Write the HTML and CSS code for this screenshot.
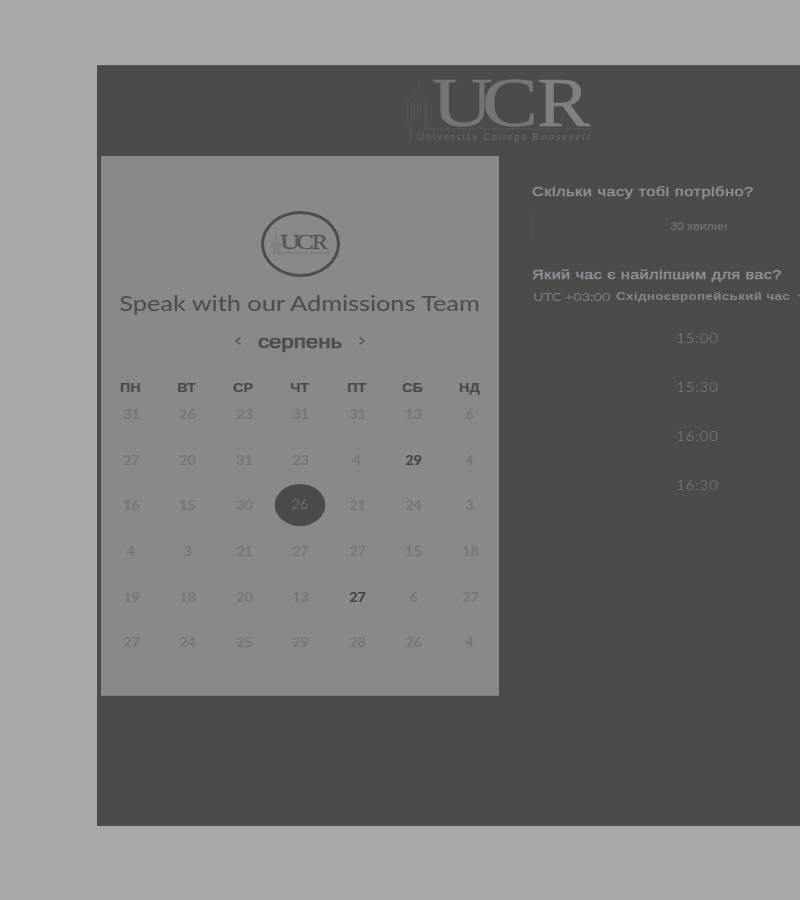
FILE: index.html
```html
<!DOCTYPE html>
<html lang="uk">
<head>
<meta charset="utf-8">
<title>Speak with our Admissions Team</title>
<link rel="stylesheet" href="styles.css">
</head>
<body>
<main class="panel">
  <header class="brand">
    <svg class="logo" viewBox="0 0 190 74" width="190" height="74" role="img">
      <g class="tower">
        <path d="M14 9v7M14 16c-1 4-6 6-6 10M14 16c1 4 6 6 6 10M2 48V30c0-3 4-3 4 0v18c0 3-4 3-4 0M9 48V28c0-4 4-4 4 0v18M16 46V28c0-4 4-4 4 0v20M22 48V30c0-3 4-3 4 0v18c0 3-4 3-4 0M6 50v18M20 48v8"/>
        <path d="M20 56H186"/>
      </g>
      <g class="letters">
        <text x="27" y="52.500" textLength="61" lengthAdjust="spacingAndGlyphs">U</text>
        <text x="77" y="52.500" textLength="56" lengthAdjust="spacingAndGlyphs">C</text>
        <text class="bright" x="132" y="52.500" textLength="53" lengthAdjust="spacingAndGlyphs">R</text>
      </g>
      <text class="sub" x="12" y="67" textLength="109" lengthAdjust="spacing">University College</text>
      <text class="sub-script" x="127" y="67" textLength="58" lengthAdjust="spacing"><tspan class="cap">R</tspan>oosevelt</text>
    </svg>
  </header>
  <div class="content">
    <section class="card">
      <div class="avatar">
        <svg class="mini" viewBox="0 0 60 26" width="60" height="26" role="img">
          <path d="M5 3v4M3 11l2-4 2 4M1 18v-6M3 20v-9M5 20v-9M7 20v-9M9 18v-6"/>
          <text x="9" y="17.500" textLength="20" lengthAdjust="spacingAndGlyphs">U</text>
          <text x="25" y="17.500" textLength="18" lengthAdjust="spacingAndGlyphs">C</text>
          <text x="41" y="17.500" textLength="16" lengthAdjust="spacingAndGlyphs">R</text>
          <text class="mini-sub" x="2" y="22.500" textLength="56" lengthAdjust="spacingAndGlyphs">University College Roosevelt</text>
        </svg>
      </div>
      <h1 class="title"><span>Speak with our Admissions Team</span></h1>
      <div class="month">
        <svg class="arrow" viewBox="0 0 8 10" width="8" height="10"><path d="M6.500 1.500 2 5l4.500 3.500"/></svg>
        <h2><span>серпень</span></h2>
        <svg class="arrow" viewBox="0 0 8 10" width="8" height="10"><path d="M1.500 1.500 6 5 1.500 8.500"/></svg>
      </div>
      <div class="week"><b>ПН</b><b>ВТ</b><b>СР</b><b>ЧТ</b><b>ПТ</b><b>СБ</b><b>НД</b></div>
      <div class="days">
        <i>31</i><i>26</i><i>23</i><i>31</i><i>31</i><i>13</i><i>6</i>
        <i>27</i><i>20</i><i>31</i><i>23</i><i>4</i><i class="open">29</i><i>4</i>
        <i>16</i><i>15</i><i>30</i><i class="selected">26</i><i>21</i><i>24</i><i>3</i>
        <i>4</i><i>3</i><i>21</i><i>27</i><i>27</i><i>15</i><i>18</i>
        <i>19</i><i>18</i><i>20</i><i>13</i><i class="open">27</i><i>6</i><i>27</i>
        <i>27</i><i>24</i><i>25</i><i>29</i><i>28</i><i>26</i><i>4</i>
      </div>
    </section>
    <section class="options">
      <h3 class="q1"><span>Скільки часу тобі потрібно?</span></h3>
      <div class="duration"><span>30 хвилин</span></div>
      <h3 class="q2"><span>Який час є найліпшим для вас?</span></h3>
      <div class="zone"><span class="utc">UTC +03:00</span><b>Східноєвропейський час</b><svg class="caret" viewBox="0 0 8 4" width="8" height="4"><path d="M0 0h8L4 4z"/></svg></div>
      <div class="times"><span>15:00</span><span>15:30</span><span>16:00</span><span>16:30</span></div>
    </section>
  </div>
</main>
</body>
</html>
```
FILE: styles.css
```css
* { box-sizing: border-box; }
body {
  margin: 0;
  height: 900px;
  padding: 65px 0 0 97px;
  overflow: hidden;
  background: #a8a8a8;
  font-family: "Liberation Sans", sans-serif;
}
h1, h2, h3 { margin: 0; font-weight: 400; }
h1 span, h2 span, h3 span { display: inline-block; white-space: nowrap; }
.panel {
  width: 703px;
  height: 761px;
  overflow: hidden;
  background: #4b4b4b;
  border-top: 1px solid #5b5b5b;
}
.brand { height: 90px; padding: 7px 0 0 308px; }
.logo, .mini { display: block; overflow: visible; }
.tower path { fill: none; stroke: #585858; stroke-width: 1; }
.letters text { font: 70px "Liberation Serif", serif; fill: #757575; stroke: #757575; stroke-width: .5; }
.letters .bright { fill: #808080; stroke: #808080; }
.sub { font: 9.5px Lato, sans-serif; fill: #6e6e6e; }
.sub-script { font: italic 11px "Liberation Serif", serif; fill: #707070; }
.cap { font-style: normal; }
.content { display: flex; padding-left: 4px; }
.card {
  flex: none;
  width: 398px;
  height: 540px;
  padding-top: 55px;
  background: #898989;
  border-bottom: 1px solid #7b7b7b;
}
.avatar {
  display: flex;
  align-items: center;
  justify-content: center;
  width: 79px;
  height: 66px;
  margin-left: 160px;
  border: 3px solid #4d4d4d;
  border-radius: 50%;
}
.mini path { fill: none; stroke: #747474; stroke-width: .8; }
.mini text { font: 22px "Liberation Serif", serif; fill: #555; stroke: #555; stroke-width: .3; }
.mini .mini-sub { font-size: 5px; fill: #6c6c6c; stroke: none; }
.title {
  height: 30px;
  margin-top: 11px;
  display: flex;
  justify-content: center;
  font: 21px/30px Lato, sans-serif;
  color: #4d4d4d;
}
.title span { transform: scaleX(1.205); }
.month {
  display: flex;
  align-items: center;
  justify-content: center;
  gap: 16px;
  height: 30px;
  margin-top: 8px;
  color: #4b4b4b;
}
.month h2 { width: 84px; display: flex; justify-content: center; font-size: 19px; -webkit-text-stroke: .6px; }
.month span { transform: translateY(1px) scaleX(1.17); }
.arrow path { fill: none; stroke: #5c5c5c; stroke-width: 1.7; }
.week, .days { display: grid; grid-template-columns: repeat(7, 56.5px); justify-items: center; }
.week { margin: 22px 0 0 1px; height: 20px; font-size: 13px; line-height: 20px; color: #4b4b4b; }
.week b { transform: scaleX(1.1); -webkit-text-stroke: .2px; }
.days { margin-left: 2px; grid-auto-rows: 45.700px; margin-top: -7px; align-items: center; }
.days i { font: 500 13px/20px Lato, sans-serif; color: #747474; transform: scaleX(1.1); -webkit-text-stroke: .15px; }
.days .open { color: #454545; font-weight: 700; }
.days .selected {
  width: 45.500px;
  height: 42px;
  margin: -1px 2px 0 0;
  border-radius: 50%;
  background: #4b4b4b;
  color: #828282;
  font-weight: 300;
  line-height: 40px;
  text-align: center;
  -webkit-text-stroke: 0;
}
.options { flex: none; width: 300px; padding: 25px 0 0 33px; }
h3 { height: 20px; font-size: 13.5px; line-height: 20px; color: #939393; -webkit-text-stroke: .35px; }
h3 span, .zone b, .utc { transform-origin: left; }
.q1 span { transform: translateY(1px) scaleX(1.2); letter-spacing: .47px; }
.q2 span { transform: translateY(1px) scaleX(1.2); letter-spacing: .35px; }
.duration {
  width: 334px;
  height: 24px;
  margin: 13px 0 26px -1px;
  border-left: 1px solid #505050;
  text-align: center;
  font-size: 11px;
  line-height: 24px;
  color: #787878;
}
.duration span { display: inline-block; transform: scaleX(1.11); }
.zone { display: flex; align-items: center; height: 16px; margin-top: 4px; font-size: 11.5px; color: #858585; white-space: nowrap; }
.utc { width: 83px; font-family: Lato, sans-serif; font-size: 12px; color: #7c7c7c; transform: translateX(1px) scaleX(1.2); flex: none; }
.zone b { width: 182px; flex: none; transform: translateX(1px) scaleX(1.15); letter-spacing: .38px; }
.caret { flex: none; fill: #757575; }
.times { width: 331px; margin-top: 9px; display: grid; grid-auto-rows: 49px; justify-items: center; align-items: center; font: 300 14px Lato, sans-serif; letter-spacing: 1px; color: #858585; }
.times span { transform: scaleX(1.04); }
```
